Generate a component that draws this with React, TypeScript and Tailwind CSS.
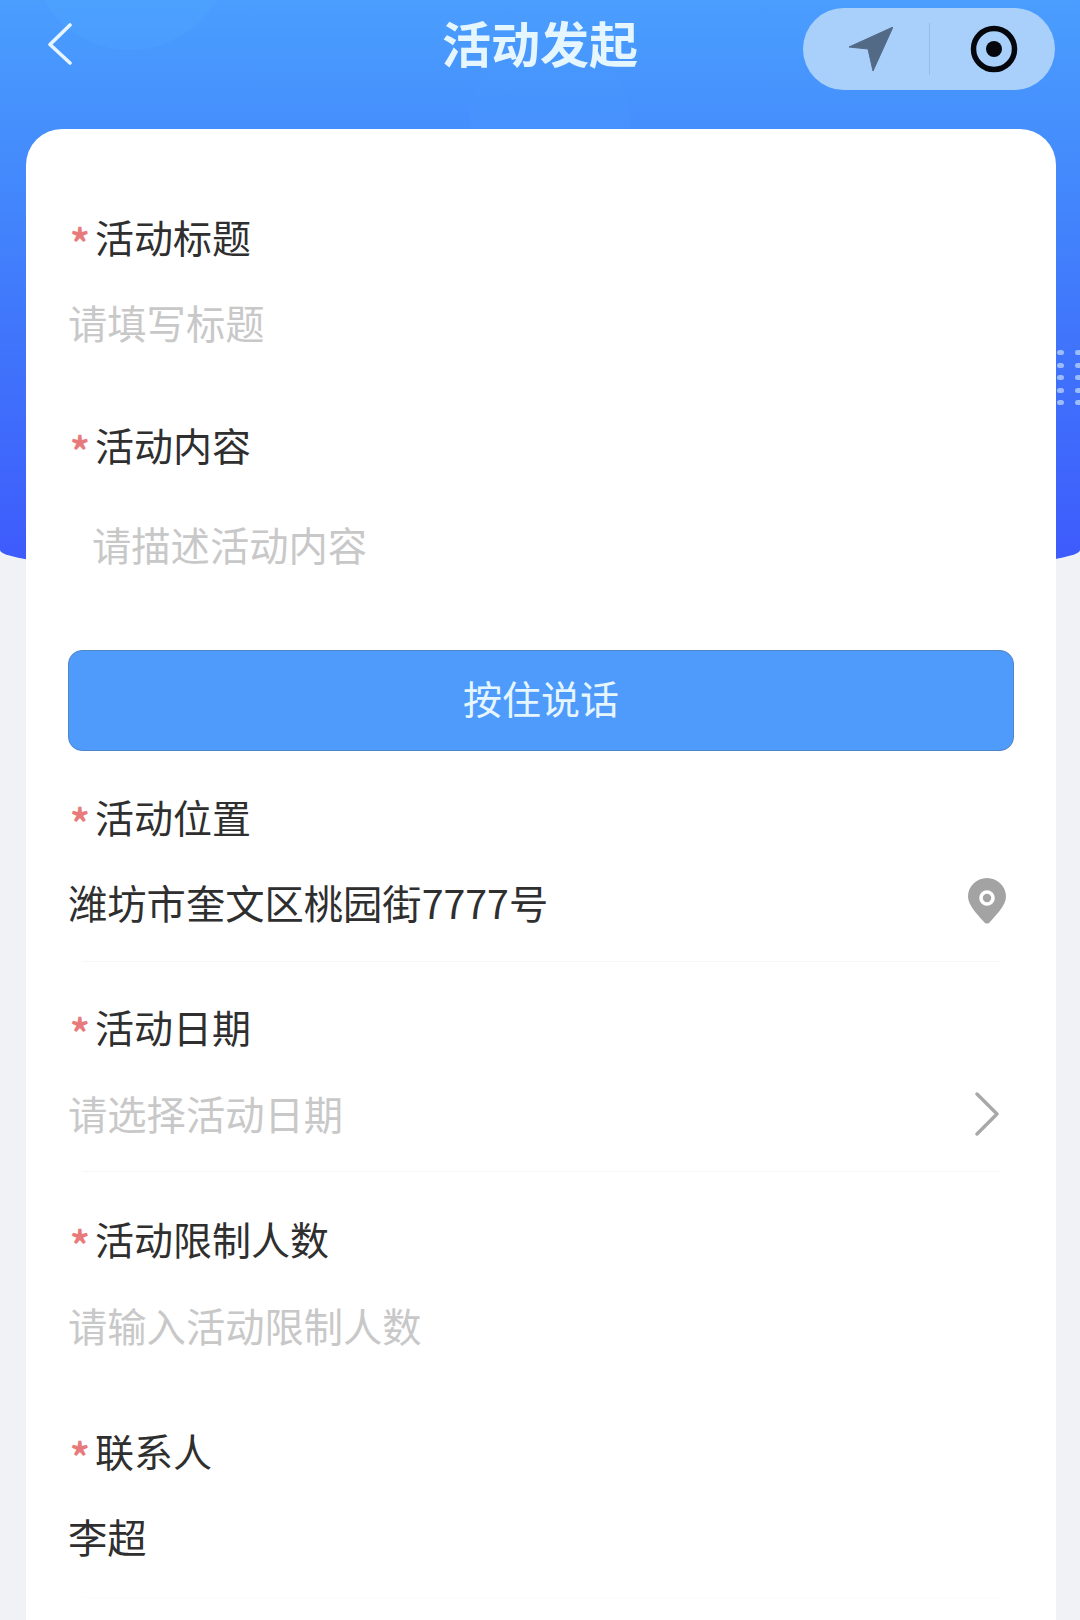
import React from "react";

const cjk = "font-['Noto_Sans_CJK_SC','Noto_Sans',sans-serif]";

const Label = ({ children }: { children: React.ReactNode }) => (
  <div className="flex h-[50px] items-center pl-[2px]">
    <span className="w-[25px] pt-[10px] text-[39px] leading-none font-bold text-[#e77b7b]">*</span>
    <span className="text-[39px] leading-[50px] text-[#2f2f2f]">{children}</span>
  </div>
);

const Divider = ({ faint }: { faint?: boolean }) => (
  <div className={faint ? "mx-[14px] h-[1px] bg-[#fcfcfc]" : "mx-[14px] h-[1px] bg-[#f7f7f7]"} />
);

const dotRows = [0, 1, 2, 3, 4];

const App = () => {
  return (
    <div className={`relative flex h-[1620px] w-[1080px] flex-col overflow-hidden bg-[#f1f2f5] ${cjk}`}>
      {/* header background */}
      <div className="absolute top-0 left-0 h-[580px] w-full overflow-hidden rounded-[0_0_50%_50%/0_0_30px_30px] bg-gradient-to-b from-[#4a9efe] via-[#4077fb] via-55% to-[#3e58fc]">
        <div className="absolute top-[-160px] left-[30px] h-[210px] w-[200px] rounded-full bg-[#4fa5ff]/35" />
        <div className="absolute top-[40px] left-[470px] h-[160px] w-[160px] rounded-full bg-[#4d9cff]/20" />
        <div className="absolute top-[350px] left-[1057px] flex gap-[11px]">
          {[0, 1].map((c) => (
            <div key={c} className="flex flex-col gap-[7.5px]">
              {dotRows.map((r) => (
                <div key={r} className="h-[5px] w-[7px] rounded-full bg-[#9dbcfb]" />
              ))}
            </div>
          ))}
        </div>
      </div>

      {/* nav bar */}
      <div className="relative grid h-[129px] grid-cols-[1fr_auto_1fr] pt-[8px]">
        <div className="pt-[15px] pl-[48px]">
          <svg width="24" height="42" viewBox="0 0 24 42" fill="none" stroke="#e8f4ff" strokeWidth="3.6" strokeLinecap="round" strokeLinejoin="round">
            <path d="M22 2 L2 21.5 L22 40" />
          </svg>
        </div>
        <div className="pt-[4px] text-[49px] leading-[60px] font-bold text-[#e6f6ff]">活动发起</div>
        <div className="flex justify-end pr-[25px]">
          <div className="flex h-[82px] w-[252px] items-center rounded-full bg-[#a8d0fb]">
            <div className="flex w-[126px] justify-center pl-[9px]">
              <svg width="44" height="45" viewBox="0 0 44 45">
                <path d="M0 20 L44 0 L24 44 L19 22 Z" fill="#536a87" stroke="#536a87" strokeWidth="1" strokeLinejoin="round" />
              </svg>
            </div>
            <div className="h-[52px] w-[1px] bg-[#94bde8]" />
            <div className="flex flex-1 justify-center pl-[3px]">
              <svg width="48" height="48" viewBox="0 0 48 48">
                <circle cx="24" cy="24" r="20.5" fill="none" stroke="#06070c" strokeWidth="5.5" />
                <circle cx="24" cy="24" r="8" fill="#06070c" />
              </svg>
            </div>
          </div>
        </div>
      </div>

      {/* form card */}
      <div className="relative mr-[24px] ml-[26px] flex-1 rounded-t-[36px] bg-white px-[42px] pt-[82px]">
        <Label>活动标题</Label>
        <div className="mt-[36px] h-[50px] text-[39.3px] leading-[50px] text-[#c8c8c8]">请填写标题</div>

        <div className="mt-[72px]">
          <Label>活动内容</Label>
        </div>
        <div className="mt-[50px] h-[50px] pl-[24px] text-[39.3px] leading-[50px] text-[#c8c8c8]">请描述活动内容</div>

        <div className="mt-[81px] flex h-[101px] w-[946px] items-center justify-center rounded-[14px] border border-[#4f86c4] bg-[#4f9bfb] pb-[6px] text-[39px] text-[#e6f6ff]">
          按住说话
        </div>

        <div className="mt-[40px]">
          <Label>活动位置</Label>
        </div>
        <div className="mt-[36px] flex h-[50px] items-center justify-between">
          <span className="text-[39.3px] leading-[50px] text-[#2f2f2f]">潍坊市奎文区桃园街7777号</span>
          <svg className="mt-[-2px] mr-[8px]" width="38" height="46" viewBox="0 0 38 46">
            <path d="M19 0 C29.5 0 38 8.3 38 18.5 C38 27 29 36 22 44 C20.3 46 17.7 46 16 44 C9 36 0 27 0 18.5 C0 8.3 8.5 0 19 0 Z" fill="#a3a3a3" />
            <circle cx="19" cy="20" r="6" fill="none" stroke="#ffffff" strokeWidth="3.6" />
          </svg>
        </div>
        <div className="mt-[34px] mb-[39px]">
          <Divider />
        </div>

        <Label>活动日期</Label>
        <div className="mt-[37px] flex h-[50px] items-center justify-between">
          <span className="text-[39.3px] leading-[50px] text-[#c8c8c8]">请选择活动日期</span>
          <svg className="mt-[2px] mr-[14px]" width="26" height="44" viewBox="0 0 26 44" fill="none" stroke="#a8a8a8" strokeWidth="3.4" strokeLinecap="round" strokeLinejoin="round">
            <path d="M3 2 L23 22 L3 42" />
          </svg>
        </div>
        <div className="mt-[33px] mb-[41px]">
          <Divider />
        </div>

        <Label>活动限制人数</Label>
        <div className="mt-[37px] h-[50px] text-[39.3px] leading-[50px] text-[#c8c8c8]">请输入活动限制人数</div>
        <div className="mt-[34px] h-[1px]" />
        <div className="mt-[40px]">
          <Label>联系人</Label>
        </div>
        <div className="mt-[36px] h-[50px] text-[39.3px] leading-[50px] text-[#2f2f2f]">李超</div>
        <div className="mt-[36px]">
          <Divider faint />
        </div>
      </div>
    </div>
  );
};

export default App;
